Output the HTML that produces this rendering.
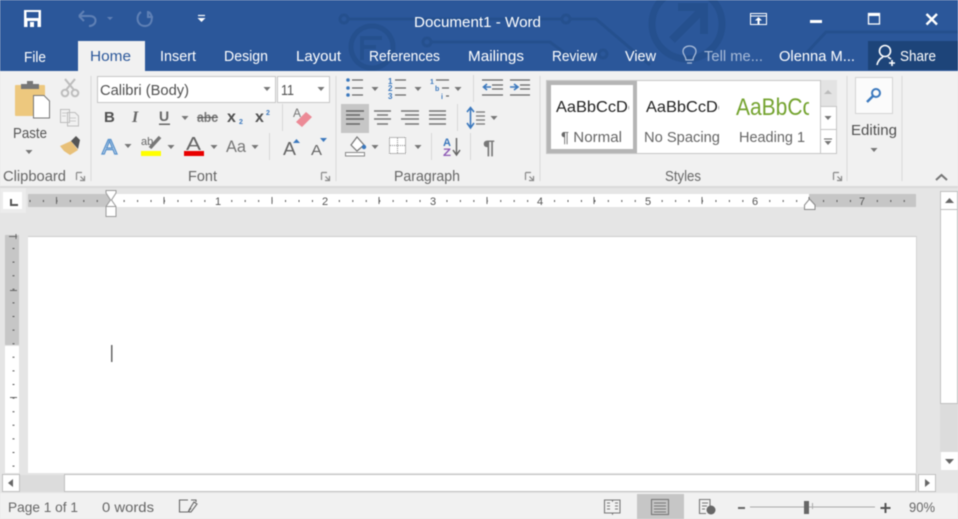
<!DOCTYPE html>
<html><head><meta charset="utf-8"><style>
html,body{margin:0;padding:0;width:958px;height:519px;overflow:hidden;background:#e5e5e5}
svg{display:block;filter:blur(0.4px)}
text{font-family:"Liberation Sans",sans-serif;font-size:15px;fill:#505050}
.t{fill:#fff;font-size:15px}
.g{font-size:14.500px;fill:#666}
.r{font-size:11px;fill:#555}
</style></head><body>
<svg width="958" height="519" viewBox="0 0 958 519" xmlns="http://www.w3.org/2000/svg">
<defs>
<path id="ar" d="M-3.500 -2H3.500L0 2Z" fill="#777"/>
<path id="lc" d="M0.500 0.500H6M0.500 0.500V8M8.500 4V8.500H4M4.500 4.500L8.500 8.500" fill="none" stroke="#888" stroke-width="1.200"/>
<clipPath id="c1"><rect x="552" y="90" width="77" height="30"/></clipPath>
<clipPath id="c2"><rect x="640" y="90" width="79" height="30"/></clipPath>
<clipPath id="c3"><rect x="730" y="90" width="79" height="30"/></clipPath>
</defs>
<!-- backgrounds -->
<rect width="958" height="519" fill="#e5e5e5"/>
<rect width="958" height="71" fill="#2b579a"/>
<!-- watermark -->
<g fill="none" stroke="#25508e" stroke-width="3">
<circle cx="344" cy="19" r="4"/><path d="M348 19H562"/><circle cx="566" cy="19" r="4"/><path d="M570 19H596L650 65"/>
<circle cx="427" cy="42" r="4"/><path d="M431 42H550L566 54H598"/><circle cx="603" cy="54" r="4"/>
<circle cx="372" cy="47" r="21" stroke-width="5"/><path d="M362 60V38H382M362 47H376" stroke-width="4"/>
<circle cx="687" cy="24" r="35" stroke-width="7"/><path d="M672 40L703 9M678 7H704V34" stroke-width="8"/>
<path d="M958 32H826L800 60"/>
</g>
<!-- share -->
<rect x="868" y="41" width="90" height="29" fill="#1d4479"/>
<!-- ribbon -->
<rect x="78" y="41" width="67" height="31" fill="#f1f1f1"/>
<rect y="71" width="958" height="115" fill="#f1f1f1"/>
<rect y="186" width="958" height="2" fill="#dadada"/>
<!-- QAT -->
<rect x="24" y="10" width="17" height="17" fill="#fff"/>
<rect x="26.500" y="12" width="12" height="6" fill="#2b579a"/>
<rect x="27.500" y="21" width="10" height="6" fill="#2b579a"/><rect x="30" y="22" width="4" height="5" fill="#fff"/>
<path d="M79 16L84 11M79 16L84 21M80 16H90C98 16 97 26 89 26" fill="none" stroke="#5f80b5" stroke-width="2"/>
<path d="M107 17H113L110 20Z" fill="#5f80b5"/>
<path d="M141 12C135 16 137 26 145 26C152 26 154 17 149 12M148 11V17H153" fill="none" stroke="#5f80b5" stroke-width="2"/>
<path d="M198 15.500H205" stroke="#fff" stroke-width="1.200"/><path d="M197.500 18H205.500L201.500 22Z" fill="#fff"/>
<!-- Title -->
<text x="414" y="27" class="t" textLength="127" lengthAdjust="spacingAndGlyphs">Document1 - Word</text>
<!-- Window btns -->
<rect x="750.500" y="13.500" width="16" height="11" fill="none" stroke="#fff"/><path d="M751 16H766" stroke="#fff"/><path d="M758.500 17L755 20.500H757.500V24H759.500V20.500H762Z" fill="#fff"/>
<rect x="810" y="20" width="12" height="3" fill="#fff"/>
<rect x="868.500" y="13.500" width="11" height="10.500" fill="none" stroke="#fff" stroke-width="1.300"/><rect x="868" y="13" width="12" height="3" fill="#fff"/>
<path d="M926.500 14L937 24.500M937 14L926.500 24.500" stroke="#fff" stroke-width="2.400"/>
<!-- Tabs -->
<text x="24" y="62" class="t" textLength="22" lengthAdjust="spacingAndGlyphs">File</text>
<text x="90" y="61" style="fill:#2b579a" textLength="41" lengthAdjust="spacingAndGlyphs">Home</text>
<text x="160" y="61" class="t" textLength="36" lengthAdjust="spacingAndGlyphs">Insert</text>
<text x="224" y="61" class="t" textLength="44" lengthAdjust="spacingAndGlyphs">Design</text>
<text x="296" y="61" class="t" textLength="45" lengthAdjust="spacingAndGlyphs">Layout</text>
<text x="369" y="61" class="t" textLength="71" lengthAdjust="spacingAndGlyphs">References</text>
<text x="468" y="61" class="t" textLength="56" lengthAdjust="spacingAndGlyphs">Mailings</text>
<text x="552" y="61" class="t" textLength="45" lengthAdjust="spacingAndGlyphs">Review</text>
<text x="625" y="61" class="t" textLength="31" lengthAdjust="spacingAndGlyphs">View</text>
<path d="M687 63H692M686 60H693C693 56 696 55 696 51.500C696 48 693 46 689.500 46C686 46 683 48 683 51.500C683 55 686 56 686 60Z" fill="none" stroke="#a9bcd9" stroke-width="1.300"/>
<text x="704" y="61" class="t" style="fill:#a9bcd9" textLength="59" lengthAdjust="spacingAndGlyphs">Tell me...</text>
<text x="779" y="61" class="t" textLength="76" lengthAdjust="spacingAndGlyphs">Olenna M...</text>
<circle cx="885" cy="51" r="5.500" fill="none" stroke="#fff" stroke-width="1.600"/><path d="M877 65C878 60 881 58 883 57M888 57L891 59M889 63H895M892 60V66" fill="none" stroke="#fff" stroke-width="1.600"/>
<text x="900" y="61" class="t" textLength="36" lengthAdjust="spacingAndGlyphs">Share</text>
<!-- separators -->
<g fill="#d8d8d8"><rect x="90.500" y="76" width="1" height="105"/><rect x="335.500" y="76" width="1" height="105"/><rect x="539.500" y="76" width="1" height="105"/><rect x="846.500" y="76" width="1" height="105"/><rect x="901.500" y="76" width="1" height="105"/>
<rect x="282" y="104" width="1" height="27"/><rect x="269" y="133" width="1" height="27"/><rect x="473" y="75" width="1" height="27"/><rect x="457" y="104" width="1" height="27"/><rect x="431" y="133" width="1" height="27"/><rect x="470" y="133" width="1" height="27"/></g>
<!-- Clipboard -->
<rect x="15" y="85" width="30" height="31" rx="1" fill="#edc87e"/>
<rect x="21" y="84" width="18" height="5" fill="#777"/><rect x="27" y="81" width="6" height="4" fill="#777"/>
<path d="M33.500 95.500H44L49.500 101V118H33.500Z" fill="#fff" stroke="#777"/>
<text x="13" y="138" style="fill:#555" textLength="34" lengthAdjust="spacingAndGlyphs">Paste</text>
<use href="#ar" x="29" y="152"/>
<g fill="none" stroke="#bdbdbd" stroke-width="2"><path d="M65 79L74 90M75 79L66 90"/><circle cx="65" cy="93" r="3.300"/><circle cx="75" cy="93" r="3.300"/></g>
<path d="M60.500 109.500H69.500V122.500H60.500Z M67.500 112.500H75L78.500 116V126H67.500Z" fill="#f1f1f1" stroke="#bdbdbd"/>
<path d="M62 113H67M62 116H66M70 118H76M70 121H76" stroke="#ccc"/>
<path d="M60 146L71 141L78 150L70 155L64 151Z" fill="#e8c078"/><path d="M71 141L76 136L80 140L78 149Z" fill="#555"/>
<text x="3" y="181" class="g" textLength="63" lengthAdjust="spacingAndGlyphs">Clipboard</text>
<use href="#lc" x="76" y="172"/>
<!-- Font -->
<rect x="97.500" y="76.500" width="178" height="26" fill="#fff" stroke="#c6c6c6"/>
<rect x="277.500" y="76.500" width="52" height="26" fill="#fff" stroke="#c6c6c6"/>
<text x="100" y="95" textLength="89" lengthAdjust="spacingAndGlyphs">Calibri (Body)</text>
<text x="281" y="95" textLength="13" lengthAdjust="spacingAndGlyphs">11</text>
<use href="#ar" x="267" y="89"/><use href="#ar" x="321" y="89"/>
<text x="104" y="122" style="font-weight:bold;font-size:15px">B</text>
<text x="132" y="122" style="font-style:italic;font-weight:bold;font-size:16px;font-family:'Liberation Serif',serif;fill:#666">I</text>
<text x="159" y="121" style="font-weight:bold;font-size:14px;fill:#666">U</text><rect x="159" y="123.500" width="11" height="1.500" fill="#666"/>
<use href="#ar" x="185" y="118"/>
<text x="197" y="122" style="font-size:14px;font-weight:bold;fill:#777" textLength="21" lengthAdjust="spacingAndGlyphs">abc</text><rect x="197" y="117" width="21" height="1" fill="#555"/>
<text x="227" y="122" style="font-size:16px;font-weight:bold">x</text><text x="239" y="124" style="font-size:7px;font-weight:bold;fill:#3b78bd">2</text>
<text x="255" y="122" style="font-size:16px;font-weight:bold">x</text><text x="266" y="115" style="font-size:7px;font-weight:bold;fill:#3b78bd">2</text>
<path d="M296 122L306 112L312 117L302 127Z" fill="#ec8a96"/><text x="293" y="117" style="font-size:12px;fill:#777">A</text>
<text x="102" y="154" style="font-size:21px;fill:#fff;stroke:#5b93cc;stroke-width:1.300" textLength="15" lengthAdjust="spacingAndGlyphs">A</text>
<use href="#ar" x="128" y="146"/>
<text x="141" y="145" style="font-size:11px;fill:#666">ab</text><path d="M150 148L160 137" stroke="#777" stroke-width="3.500"/>
<rect x="141" y="151" width="20" height="5" fill="#ff0"/><use href="#ar" x="171" y="147"/>
<text x="186" y="150" style="font-size:18px;fill:#666" textLength="15" lengthAdjust="spacingAndGlyphs">A</text>
<rect x="184" y="151" width="20" height="5" fill="#e80000"/><use href="#ar" x="214" y="147"/>
<text x="226" y="152" style="font-size:17px;fill:#777" textLength="20" lengthAdjust="spacingAndGlyphs">Aa</text><use href="#ar" x="255" y="147"/>
<text x="283" y="155" style="font-size:18px;fill:#666" textLength="13" lengthAdjust="spacingAndGlyphs">A</text><path d="M293 143H300L296.500 139Z" fill="#3b78bd"/>
<text x="311" y="155" style="font-size:15px;fill:#666" textLength="11" lengthAdjust="spacingAndGlyphs">A</text><path d="M320 138H327L323.500 142Z" fill="#3b78bd"/>
<text x="188" y="181" class="g" textLength="29" lengthAdjust="spacingAndGlyphs">Font</text>
<use href="#lc" x="321" y="172"/>
<!-- Paragraph -->
<rect x="341" y="104" width="28" height="29" fill="#c6c6c6"/>
<g fill="#3b78bd"><circle cx="348" cy="80" r="1.800"/><circle cx="348" cy="88" r="1.800"/><circle cx="348" cy="95" r="1.800"/></g>
<text x="388" y="84" style="font-size:8px;font-weight:bold;fill:#3b78bd">1</text><text x="388" y="91" style="font-size:8px;font-weight:bold;fill:#3b78bd">2</text><text x="388" y="99" style="font-size:8px;font-weight:bold;fill:#3b78bd">3</text>
<text x="430" y="84" style="font-size:7px;font-weight:bold;fill:#3b78bd">1</text><text x="435" y="91" style="font-size:7px;font-weight:bold;fill:#3b78bd">b</text><text x="441" y="99" style="font-size:7px;font-weight:bold;fill:#3b78bd">i</text>
<g stroke="#666" stroke-width="1.200" fill="none"><path d="M352 80H363M352 88H363M352 95H363M395 80H406M395 88H406M395 95H406M436 80H449M442 88H449M446 96H449"/>
<path d="M482 80H503M492 85H503M492 89H503M482 95H503M510 80H530M520 85H530M520 89H530M510 95H530"/>
<path d="M346 111H364M346 115H360M346 119H364M346 124H360" stroke-width="1.400"/>
<path d="M374 111H391M377 115H388M374 119H391M377 124H388" stroke="#777" stroke-width="1.400"/><path d="M401 111H419M405 115H419M401 119H419M405 124H419" stroke="#777" stroke-width="1.400"/><path d="M429 111H446M429 115H446M429 119H446M429 124H446" stroke="#777" stroke-width="1.400"/>
<path d="M476 112H485M476 116H485M476 120H485M476 124H485" stroke="#777"/></g>
<path d="M491 87H484M487 84L483.500 87L487 90" stroke="#3b78bd" stroke-width="1.600" fill="none"/><path d="M510 87H517M514 84L518 87L514 90" stroke="#3b78bd" stroke-width="1.600" fill="none"/>
<path d="M470.500 108V127M467 112L470.500 107.500L474 112M467 123L470.500 128L474 123" stroke="#3b78bd" stroke-width="1.600" fill="none"/>
<use href="#ar" x="375" y="89"/><use href="#ar" x="418" y="89"/><use href="#ar" x="458" y="89"/><use href="#ar" x="494" y="118"/>
<path d="M351 145L357 137L364 145L357 151Z" fill="#fff" stroke="#777" stroke-width="1.200"/><circle cx="364" cy="147" r="2.200" fill="#3b78bd"/><rect x="345.500" y="152.500" width="19" height="3.500" fill="#fff" stroke="#888"/>
<use href="#ar" x="375" y="147"/>
<rect x="389.500" y="137.500" width="16" height="16" fill="#fff" stroke="#777" stroke-dasharray="1 1"/><path d="M397.500 138V153M390 145.500H405" stroke="#888" stroke-dasharray="1 1"/>
<use href="#ar" x="418" y="147"/>
<text x="443" y="146" style="font-size:11px;font-weight:bold;fill:#3b78bd" textLength="8" lengthAdjust="spacingAndGlyphs">A</text><text x="443" y="156" style="font-size:11px;font-weight:bold;fill:#8e5ab5" textLength="8" lengthAdjust="spacingAndGlyphs">Z</text>
<path d="M456.500 138V154M453 150L456.500 155L460 150" stroke="#666" stroke-width="1.500" fill="none"/>
<text x="483" y="154" style="font-size:19px;font-weight:bold;fill:#777" textLength="12" lengthAdjust="spacingAndGlyphs">¶</text>
<text x="394" y="181" class="g" textLength="66" lengthAdjust="spacingAndGlyphs">Paragraph</text>
<use href="#lc" x="525" y="172"/>
<!-- Styles -->
<rect x="546.500" y="80.500" width="290" height="73" fill="#fff" stroke="#c6c6c6"/>
<rect x="549" y="83" width="86" height="68" fill="#fff" stroke="#b5b5b5" stroke-width="4"/>
<g clip-path="url(#c1)"><text x="556" y="112" style="font-size:16px;fill:#222" textLength="80" lengthAdjust="spacingAndGlyphs">AaBbCcDc</text></g>
<g clip-path="url(#c2)"><text x="646" y="112" style="font-size:16px;fill:#222" textLength="80" lengthAdjust="spacingAndGlyphs">AaBbCcDc</text></g>
<g clip-path="url(#c3)"><text x="736" y="115" style="font-size:24px;fill:#74a32f" textLength="77" lengthAdjust="spacingAndGlyphs">AaBbCc</text></g>
<text x="561" y="142" style="fill:#666" textLength="61" lengthAdjust="spacingAndGlyphs">¶ Normal</text>
<text x="644" y="142" style="fill:#666" textLength="76" lengthAdjust="spacingAndGlyphs">No Spacing</text>
<text x="739" y="142" style="fill:#666" textLength="66" lengthAdjust="spacingAndGlyphs">Heading 1</text>
<rect x="820" y="80" width="17" height="26" fill="#e3e3e3"/><rect x="820" y="80" width="1" height="74" fill="#c6c6c6"/>
<rect x="820" y="106" width="17" height="1" fill="#c6c6c6"/><rect x="820" y="129" width="17" height="1" fill="#c6c6c6"/>
<path d="M824 94H832L828 90Z" fill="#bbb"/><use href="#ar" x="828" y="118"/><path d="M824 139H832" stroke="#666"/><use href="#ar" x="828" y="143"/>
<text x="665" y="181" class="g" textLength="36" lengthAdjust="spacingAndGlyphs">Styles</text>
<use href="#lc" x="833" y="172"/>
<!-- Editing -->
<rect x="855.500" y="77.500" width="37" height="36" fill="#fbfbfb" stroke="#d4d4d4"/>
<circle cx="876" cy="93" r="4" fill="none" stroke="#3b78bd" stroke-width="2"/><path d="M873 96L867 102" stroke="#3b78bd" stroke-width="2.500"/>
<text x="851" y="135" textLength="46" lengthAdjust="spacingAndGlyphs">Editing</text>
<use href="#ar" x="874" y="150"/>
<path d="M936 180L941.500 175L947 180" fill="none" stroke="#777" stroke-width="2"/>
<!-- ruler corner -->
<rect x="0" y="188" width="26" height="25" fill="#ececec"/>
<rect x="3" y="192" width="19" height="17" fill="#fff"/>
<path d="M11 199V205H18" fill="none" stroke="#555" stroke-width="2"/>
<!-- h ruler -->
<rect x="28" y="194" width="82" height="13" fill="#c6c6c6"/><rect x="110" y="194" width="700" height="13" fill="#fff"/><rect x="809" y="194" width="107" height="13" fill="#c6c6c6"/>
<path d="M29.500 201H916" stroke="#555" stroke-width="2" stroke-dasharray="1 12.450"/>
<path d="M56.500 197V204M164 197V204M272 197V204M379 197V204M487 197V204M594 197V204M702 197V204M809 197V204" stroke="#666" stroke-width="1"/>
<rect x="212" y="194" width="12" height="13" fill="#fff"/><rect x="319" y="194" width="12" height="13" fill="#fff"/><rect x="427" y="194" width="12" height="13" fill="#fff"/><rect x="534" y="194" width="12" height="13" fill="#fff"/><rect x="642" y="194" width="12" height="13" fill="#fff"/><rect x="749" y="194" width="12" height="13" fill="#fff"/><rect x="857" y="194" width="12" height="13" fill="#c6c6c6"/>
<text x="215" y="205" class="r">1</text><text x="322" y="205" class="r">2</text><text x="430" y="205" class="r">3</text><text x="537" y="205" class="r">4</text><text x="645" y="205" class="r">5</text><text x="752" y="205" class="r">6</text><text x="859" y="205" class="r">7</text>
<path d="M106 190.500H116V193L111.500 200L116 206.500V216.500H106V206.500L110.500 200L106 193Z" fill="#fff" stroke="#999"/>
<path d="M106 206.500H116" stroke="#999"/>
<path d="M809.500 199L815 205V209.500H804.500V205Z" fill="#fff" stroke="#888"/>
<!-- v ruler -->
<rect x="5" y="235" width="14" height="110" fill="#c6c6c6"/><rect x="5" y="346" width="14" height="127" fill="#fff"/>
<path d="M13.500 248V470" stroke="#555" stroke-width="2" stroke-dasharray="1 12.600"/>
<path d="M10 290.500H17M10 397.500H17M9 236.500H17" stroke="#666"/><path d="M16 234V239" stroke="#666"/>
<!-- page -->
<rect x="28" y="236" width="889" height="237" fill="#fff"/><rect x="28" y="236" width="889" height="1" fill="#ccc"/><rect x="916" y="236" width="1" height="237" fill="#d4d4d4"/>
<rect x="111" y="345" width="1.500" height="17" fill="#666"/>
<!-- v scroll -->
<rect x="940" y="189" width="18" height="282" fill="#e5e5e5"/>
<rect x="940" y="209" width="18" height="243" fill="#dcdcdc"/>
<rect x="940.500" y="191.500" width="17" height="18" fill="#fff" stroke="#c0c0c0"/>
<path d="M945 203H954L949.500 198Z" fill="#666"/>
<rect x="940.500" y="209.500" width="17" height="194" fill="#fff" stroke="#c0c0c0"/>
<rect x="941" y="452" width="17" height="18" fill="#fff"/>
<path d="M945 459H954L949.500 464Z" fill="#666"/>
<!-- h scroll -->
<rect x="0" y="473" width="958" height="20" fill="#e5e5e5"/>
<rect x="2.500" y="474.500" width="17" height="17" fill="#fff" stroke="#c0c0c0"/><path d="M13 479V487L8 483Z" fill="#666"/>
<rect x="20" y="475" width="44" height="17" fill="#dcdcdc"/>
<rect x="64.500" y="474.500" width="851.500" height="17" fill="#fff" stroke="#c0c0c0"/>
<rect x="918.500" y="474.500" width="17" height="17" fill="#fff" stroke="#c0c0c0"/><path d="M925 479V487L930 483Z" fill="#666"/>
<!-- status bar -->
<rect y="493" width="958" height="26" fill="#f1f1f1"/>
<rect x="637" y="494" width="47" height="25" fill="#c6c6c6"/>
<text x="8" y="512" style="font-size:14px;fill:#666" textLength="70" lengthAdjust="spacingAndGlyphs">Page 1 of 1</text>
<text x="102" y="512" style="font-size:14px;fill:#666" textLength="52" lengthAdjust="spacingAndGlyphs">0 words</text>
<path d="M188 500H179.500V512H188M188 512L191 508M191 500H196V502M194 502L189 510V512H191L197 504Z" fill="none" stroke="#666" stroke-width="1.100"/>
<g fill="none" stroke="#777" stroke-width="1.100"><path d="M604.500 500H612L612.500 501L613 500H620V513H613L612.500 514L612 513H604.500Z"/><path d="M607 503H610M607 506H610M607 509H610M615 503H618M615 506H618M615 509H618"/>
<rect x="651.500" y="499.500" width="17" height="15"/><path d="M654 503H666M654 506H666M654 509H666M654 512H666"/>
<path d="M710 509V499.500H699.500V513.500H706M702 503H708M702 506H707M702 509H705"/></g>
<circle cx="711" cy="510" r="4.500" fill="#666"/>
<rect x="738" y="507" width="7" height="2" fill="#666"/>
<rect x="750" y="506.500" width="125" height="1" fill="#aaa"/>
<rect x="804" y="501" width="5" height="13" fill="#666"/><rect x="812" y="503" width="1" height="6" fill="#aaa"/>
<path d="M885.500 503V513M880.500 508H890.500" stroke="#555" stroke-width="2"/>
<text x="909" y="512" style="font-size:14px;fill:#666" textLength="26" lengthAdjust="spacingAndGlyphs">90%</text>
</svg>
</body></html>
